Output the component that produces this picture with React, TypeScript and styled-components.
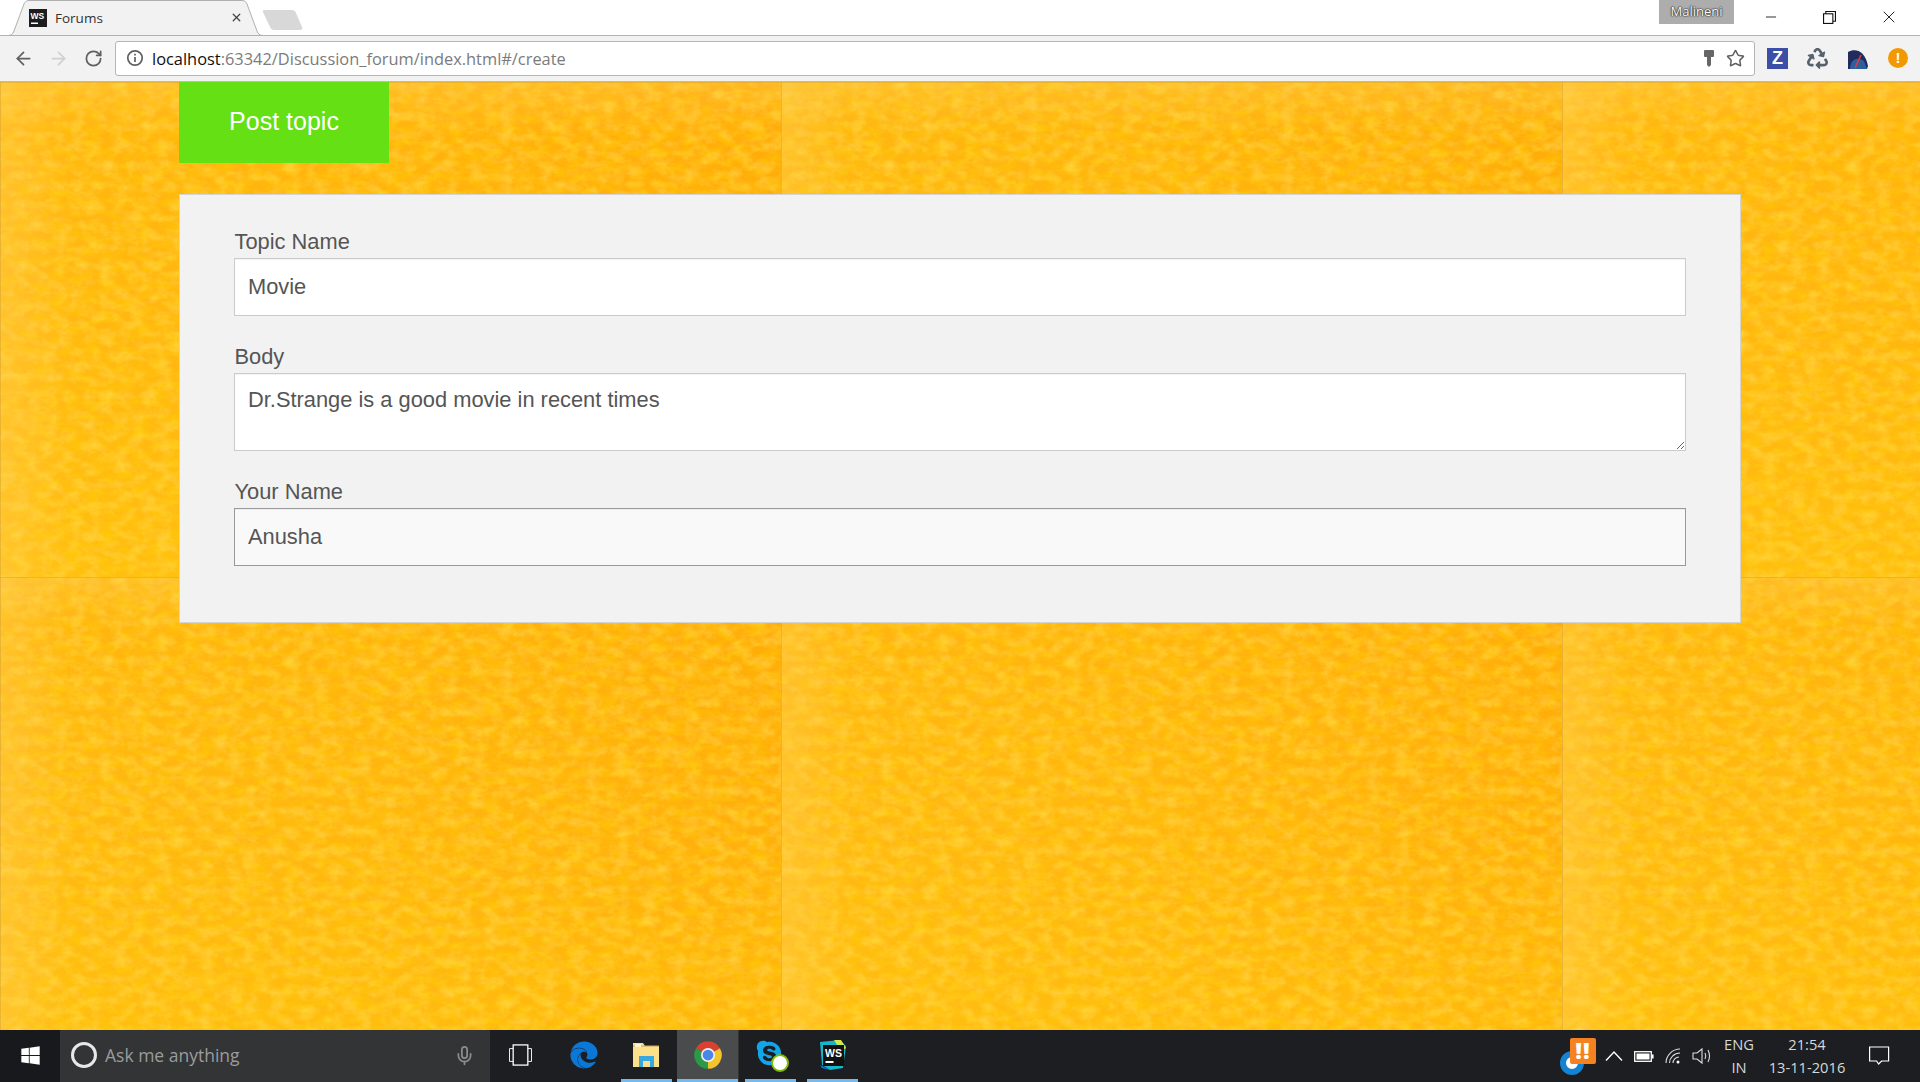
import React from 'react';
import styled, { createGlobalStyle } from 'styled-components';
import { ArrowLeft, ArrowRight, RotateCw, Star, Mic, X, Minus } from 'lucide-react';
import { FaEdge, FaRecycle, FaSkype, FaWindows } from 'react-icons/fa';

const tile = `<svg xmlns="http://www.w3.org/2000/svg" width="781" height="495">
<defs>
<linearGradient id="h" x1="0" x2="1" y1="0" y2="0"><stop offset="0" stop-color="#ffb813"/><stop offset=".45" stop-color="#ffb50f"/><stop offset="1" stop-color="#ffac0a"/></linearGradient>
<linearGradient id="v" x1="0" x2="0" y1="0" y2="1"><stop offset="0" stop-color="#ffa800" stop-opacity=".2"/><stop offset=".5" stop-color="#ffc010" stop-opacity=".1"/><stop offset="1" stop-color="#ffc410" stop-opacity=".55"/></linearGradient>
<linearGradient id="l" x1="0" x2="1" y1="0" y2="0"><stop offset="0" stop-color="#ffd060" stop-opacity=".35"/><stop offset="1" stop-color="#ffd060" stop-opacity="0"/></linearGradient>
<linearGradient id="t" x1="0" x2="0" y1="0" y2="1"><stop offset="0" stop-color="#ffd060" stop-opacity=".3"/><stop offset="1" stop-color="#ffd060" stop-opacity="0"/></linearGradient>
<filter id="n" x="0" y="0" width="100%" height="100%"><feTurbulence type="fractalNoise" baseFrequency=".06 .12" numOctaves="5" seed="7"/><feColorMatrix values="0 0 0 0 1 0 0 0 0 .64 0 0 0 0 0 1.1 0 0 0 -.42"/><feGaussianBlur stdDeviation=".7"/></filter>
<filter id="m" x="0" y="0" width="100%" height="100%"><feTurbulence type="fractalNoise" baseFrequency=".07 .1" numOctaves="5" seed="23"/><feColorMatrix values="0 0 0 0 1 0 0 0 0 .76 0 0 0 0 .12 1 0 0 0 -.38"/><feGaussianBlur stdDeviation=".7"/></filter>
</defs>
<rect width="781" height="495" fill="url(#h)"/>
<rect width="781" height="495" fill="url(#v)"/>
<rect width="781" height="495" filter="url(#n)"/>
<rect width="781" height="495" filter="url(#m)"/>
<rect width="70" height="495" fill="url(#l)"/>
<rect width="781" height="50" fill="url(#t)"/>
<rect width="1" height="495" fill="#c89a30" opacity=".4"/>
<rect width="781" height="1" fill="#c89a30" opacity=".4"/>
</svg>`;

const Global = createGlobalStyle`
  html, body { margin: 0; padding: 0; height: 100%; overflow: hidden; }
  body { font-family: "Liberation Sans", Arial, sans-serif; }
  #root { height: 100%; }
  * { box-sizing: border-box; }
`;

const Page = styled.div`
  display: flex;
  flex-direction: column;
  width: 1920px;
  height: 1082px;
`;

/* ---------- browser chrome ---------- */
const TabStrip = styled.div`
  display: flex;
  align-items: flex-start;
  height: 36px;
  background: #fff;
  border-bottom: 1px solid #b4b4b4;
  padding-left: 8px;
  position: relative;
`;
const Tab = styled.div`
  position: relative;
  display: flex;
  align-items: center;
  width: 255px;
  height: 36px;
  padding: 0 20px 1px 21px;
  font-family: "Open Sans", sans-serif;
  font-size: 13.5px;
  color: #333;
`;
const TabShape = styled.svg`
  position: absolute;
  inset: 0;
  width: 255px;
  height: 36px;
`;
const TabIcon = styled.svg`
  position: relative;
  width: 18px;
  height: 18px;
  margin-right: 8px;
  flex: none;
`;
const TabTitle = styled.span`
  position: relative;
  flex: 1;
`;
const TabClose = styled(X)`
  position: relative;
  width: 13px;
  height: 13px;
  color: #444;
`;
const NewTab = styled.svg`
  width: 44px;
  height: 22px;
  margin: 9px 0 0 -1px;
`;
const Badge = styled.div`
  margin-left: auto;
  width: 75px;
  height: 24px;
  background: #adadad;
  color: #fff;
  font-family: "Open Sans", sans-serif;
  font-size: 13px;
  line-height: 22px;
  text-align: center;
  text-shadow: 0 0 2px #222, 0 0 1px #222, 0 0 1px #222;
`;
const WinButtons = styled.div`
  display: flex;
  width: 186px;
  height: 34px;
  padding-left: 7px;
`;
const WinButton = styled.div`
  display: flex;
  align-items: center;
  justify-content: center;
  width: 59px;
  height: 34px;
  color: #111;
`;
const Toolbar = styled.div`
  display: flex;
  align-items: center;
  height: 46px;
  padding: 0 12px 1px 0;
  background: #f2f2f2;
  border-bottom: 1px solid #bdbdbd;
`;
const NavButton = styled.div<{ $off?: boolean }>`
  display: flex;
  align-items: center;
  justify-content: center;
  width: 35px;
  height: 30px;
  color: ${p => (p.$off ? '#d0d0d0' : '#5f5f5f')};
`;
const NavGroup = styled.div`
  display: flex;
  padding-left: 6px;
  margin-right: 4px;
`;
const Omnibox = styled.div`
  flex: 1;
  display: flex;
  align-items: center;
  height: 35px;
  padding: 0 9px 0 10px;
  background: #fff;
  border: 1px solid #b5b5b5;
  border-radius: 3px;
`;
const Url = styled.div`
  flex: 1;
  margin-left: 8px;
  font-family: "Open Sans", sans-serif;
  font-size: 16.4px;
  color: #111;
  white-space: nowrap;
`;
const UrlRest = styled.span`
  color: #7b7b7b;
`;
const OmniIcons = styled.div`
  display: flex;
  align-items: center;
  gap: 11px;
`;
const Extensions = styled.div`
  display: flex;
  align-items: center;
  gap: 19px;
  margin-left: 12px;
`;
const ZIcon = styled.div`
  width: 21px;
  height: 21px;
  background: #3a4fa5;
  color: #fff;
  font-weight: 700;
  font-size: 18px;
  line-height: 21px;
  text-align: center;
`;
const RecycleIcon = styled(FaRecycle)`
  width: 21px;
  height: 21px;
  color: #55626d;
`;
const AlertIcon = styled.div`
  width: 20px;
  height: 20px;
  border-radius: 50%;
  background: #f29900;
  color: #fff;
  font-weight: 700;
  font-size: 15px;
  line-height: 20px;
  text-align: center;
`;

/* ---------- page ---------- */
const Main = styled.main`
  flex: 1;
  padding: 0 179px;
  background-image: url("data:image/svg+xml,${encodeURIComponent(tile)}");
  background-repeat: repeat;
  background-position: 0 0;
`;
const PostButton = styled.div`
  display: flex;
  align-items: center;
  justify-content: center;
  width: 210px;
  height: 81px;
  padding-bottom: 2px;
  background: #64e014;
  color: #fff;
  font-size: 25px;
`;
const Card = styled.form`
  display: flex;
  flex-direction: column;
  gap: 27px;
  margin-top: 31px;
  padding: 33px 54px 56px;
  background: #f2f2f2;
  border: 1px solid #d4d4d4;
`;
const Field = styled.div`
  display: flex;
  flex-direction: column;
`;
const Label = styled.label`
  font-size: 21.85px;
  line-height: 26px;
  margin-bottom: 4px;
  padding: 1px 0 0 0.5px;
  height: 26px;
  color: #555;
`;
const inputCss = `
  display: block;
  width: 100%;
  padding: 0 13px;
  background: #fff;
  border: 1.6px solid #cbcbcb;
  border-radius: 0;
  outline: none;
  font-family: "Liberation Sans", Arial, sans-serif;
  font-size: 21.85px;
  color: #555;
  box-shadow: inset 0 1px 1px rgba(0,0,0,.05);
`;
const TextInput = styled.input<{ $focus?: boolean }>`
  ${inputCss}
  height: 58px;
  ${p => (p.$focus ? 'background: #f9f9f9; border-color: #999;' : '')}
`;
const TextArea = styled.textarea`
  ${inputCss}
  height: 78px;
  padding-top: 13px;
  line-height: 26px;
`;

/* ---------- taskbar ---------- */
const Taskbar = styled.div`
  display: flex;
  align-items: stretch;
  height: 52px;
  background: #1c1e21;
  color: #fff;
  font-family: "Open Sans", sans-serif;
`;
const StartButton = styled.div`
  display: flex;
  align-items: center;
  justify-content: center;
  width: 60px;
  padding-bottom: 2px;
  background: #17191c;
`;
const StartIcon = styled(FaWindows)`
  width: 21px;
  height: 21px;
`;
const SearchBox = styled.div`
  display: flex;
  align-items: center;
  width: 430px;
  padding: 0 0 2px 11px;
  background: #333436;
  color: #9c9c9c;
  font-size: 17.5px;
`;
const Cortana = styled.div`
  width: 26px;
  height: 26px;
  margin-right: 8px;
  border-radius: 50%;
  border: 3px solid #e8e8e8;
`;
const SearchText = styled.span`
  flex: 1;
`;
const MicIcon = styled(Mic)`
  width: 21px;
  height: 21px;
  margin-right: 15px;
  color: #8c8c8c;
`;
const TaskView = styled.div`
  display: flex;
  align-items: center;
  justify-content: center;
  width: 61px;
  padding-bottom: 2px;
`;
const TaskItem = styled.div<{ $active?: boolean; $open?: boolean }>`
  position: relative;
  display: flex;
  align-items: center;
  justify-content: center;
  width: 62px;
  padding-bottom: 2px;
  background: ${p => (p.$active ? '#4a4b4d' : 'transparent')};
  border-right: ${p => (p.$active ? '1px solid #333' : 'none')};
  &::after {
    content: '';
    display: ${p => (p.$open ? 'block' : 'none')};
    position: absolute;
    left: ${p => (p.$active ? '0' : '6px')};
    right: ${p => (p.$active ? '0' : '5px')};
    bottom: 0;
    height: 3px;
    background: #76b9ed;
  }
`;
const TaskSpacer = styled.div`
  width: 2px;
`;
const EdgeIcon = styled(FaEdge)`
  width: 28px;
  height: 28px;
  color: #0b78d7;
`;
const SkypeWrap = styled.div`
  position: relative;
  width: 30px;
  height: 30px;
  margin-top: -2px;
`;
const SkypeIcon = styled(FaSkype)`
  width: 29px;
  height: 29px;
  color: #12a5e8;
`;
const SkypeStatus = styled.span`
  position: absolute;
  right: -4px;
  bottom: -3px;
  width: 18px;
  height: 18px;
  border-radius: 50%;
  background: #fff;
  border: 2px solid #7fb900;
`;
const Tray = styled.div`
  display: flex;
  align-items: center;
  margin-left: auto;
`;
const UpdateIcon = styled.div`
  position: relative;
  width: 24px;
  height: 24px;
  margin: 14px 21px 0 0;
  border-radius: 50%;
  background: #fff;
  border: 6px solid #1383d2;
`;
const Alerts = styled.div`
  position: absolute;
  left: 4px;
  top: -19px;
  width: 26px;
  height: 26px;
  border-radius: 2px;
  background: #f58220;
  color: #fff;
  font-weight: 800;
  font-size: 23px;
  letter-spacing: 1px;
  line-height: 25px;
  text-align: center;
`;
const TrayIcons = styled.div`
  display: flex;
  align-items: center;
  gap: 11px;
  margin-right: 10px;
`;
const TrayText = styled.div<{ $w: number }>`
  display: flex;
  flex-direction: column;
  align-items: center;
  justify-content: center;
  gap: 3px;
  width: ${p => p.$w}px;
  padding-bottom: 2px;
  font-size: 14.7px;
  line-height: 20px;
  color: #d8d8d8;
`;
const ActionIcon = styled.svg`
  width: 22px;
  height: 22px;
  margin: 0 30px 0 10px;
`;

const ChromeIcon = () => (
  <svg width="30" height="30" viewBox="0 0 24 24">
    <path d="M12 12 2.47 6.5A11 11 0 0 1 21.53 6.5Z" fill="#d8412f" />
    <path d="M12 12 21.53 6.5A11 11 0 0 1 12 23Z" fill="#f5c32c" />
    <path d="M12 12 12 23A11 11 0 0 1 2.47 6.5Z" fill="#2a9a46" />
    <circle cx="12" cy="12" r="5.6" fill="#f1f1f1" />
    <circle cx="12" cy="12" r="4.3" fill="#4a86e8" />
  </svg>
);

const FolderIcon = () => (
  <svg width="28" height="28" viewBox="0 0 28 28">
    <path d="M1 2h10l2 3h14v21H1Z" fill="#fde08a" />
    <path d="M1 5h26" stroke="#c8a458" strokeWidth="1" />
    <rect x="3" y="3" width="6" height="3" fill="#fff4cf" />
    <path d="M7 15h15v11h-4v-6h-7v6H7Z" fill="#3aa8e0" />
  </svg>
);

const WsTaskIcon = () => (
  <svg width="32" height="32" viewBox="0 0 32 32">
    <path d="M4 3 24 1l6 6-3 22-13 2-8-5Z" fill="#19b5c9" />
    <path d="M18 1h7l5 8-5 3Z" fill="#d7e64c" />
    <path d="M4 26 14 31 6 29Z" fill="#087cfa" />
    <rect x="7" y="6" width="21" height="21" fill="#111" />
    <text x="9" y="17.5" fontFamily="Liberation Sans" fontWeight="700" fontSize="10.5" fill="#fff">WS</text>
    <rect x="9.5" y="22" width="8" height="2" fill="#fff" />
  </svg>
);

export default function App() {
  return (
    <Page>
      <Global />
      <TabStrip>
        <Tab>
          <TabShape viewBox="0 0 255 36">
            <path d="M0 35.5C3 35.5 5 34 6 31L16 4C17 2 18 .5 21 .5H234C237 .5 238 2 239 4L249 31C250 34 252 35.5 255 35.5Z" fill="#f2f2f2" stroke="#b0b0b0" />
          </TabShape>
          <TabIcon viewBox="0 0 18 18"><rect width="18" height="18" fill="#1d1d1f" /><text x="1.5" y="9.5" fontFamily="Liberation Sans" fontWeight="700" fontSize="8.5" fill="#fff">WS</text><rect x="2" y="13.5" width="7" height="1.5" fill="#fff" /></TabIcon>
          <TabTitle>Forums</TabTitle>
          <TabClose strokeWidth={2.4} />
        </Tab>
        <NewTab viewBox="0 0 44 22">
          <path d="M2 1H30C32 1 33 2 34 4L40 18C41 20 40 21 38 21H12C10 21 9 20 8 18L1 3C.5 2 1 1 2 1Z" fill="#d8d8d8" />
        </NewTab>
        <Badge>Malineni</Badge>
        <WinButtons>
          <WinButton><Minus size={16} strokeWidth={1.3} /></WinButton>
          <WinButton>
            <svg width="13" height="13" viewBox="0 0 14 14" fill="none" stroke="#111" strokeWidth="1.2"><rect x=".6" y="3" width="10" height="10.4" /><path d="M3 3V.6h10.4V11H10.6" /></svg>
          </WinButton>
          <WinButton><X size={20} strokeWidth={1.1} /></WinButton>
        </WinButtons>
      </TabStrip>
      <Toolbar>
        <NavGroup>
          <NavButton><ArrowLeft size={21} strokeWidth={2} /></NavButton>
          <NavButton $off><ArrowRight size={21} strokeWidth={2} /></NavButton>
          <NavButton><RotateCw size={19} strokeWidth={2.2} /></NavButton>
        </NavGroup>
        <Omnibox>
          <svg width="18" height="18" viewBox="0 0 18 18" fill="none" stroke="#5f5f5f" strokeWidth="1.7"><circle cx="9" cy="9" r="7.2" /><path d="M9 8v5M9 4.8v1.6" /></svg>
          <Url>localhost<UrlRest>:63342/Discussion_forum/index.html#/create</UrlRest></Url>
          <OmniIcons>
            <svg width="12" height="18" viewBox="0 0 12 18"><rect x="1" y="1" width="10" height="7" rx="1" fill="#666" /><rect x="4" y="8" width="4" height="8" fill="#666" /><path d="M4 16h4l-2 2Z" fill="#666" /></svg>
            <Star size={19} strokeWidth={1.9} color="#5f5f5f" />
          </OmniIcons>
        </Omnibox>
        <Extensions>
          <ZIcon>Z</ZIcon>
          <RecycleIcon />
          <svg width="22" height="21" viewBox="0 0 22 21">
            <path d="M1 21V4C8 0 18 2 21 18L20 21Z" fill="#232a5c" />
            <path d="M3 21C3 12 10 8 17 13L20 21Z" fill="#2d5e9e" />
            <path d="M8 20 14 7" stroke="#e23a3a" strokeWidth="1.6" />
          </svg>
          <AlertIcon>!</AlertIcon>
        </Extensions>
      </Toolbar>
      <Main>
        <PostButton>Post topic</PostButton>
        <Card>
          <Field>
            <Label>Topic Name</Label>
            <TextInput defaultValue="Movie" />
          </Field>
          <Field>
            <Label>Body</Label>
            <TextArea defaultValue="Dr.Strange is a good movie in recent times" />
          </Field>
          <Field>
            <Label>Your Name</Label>
            <TextInput $focus defaultValue="Anusha" />
          </Field>
        </Card>
      </Main>
      <Taskbar>
        <StartButton><StartIcon /></StartButton>
        <SearchBox>
          <Cortana />
          <SearchText>Ask me anything</SearchText>
          <MicIcon />
        </SearchBox>
        <TaskView>
          <svg width="25" height="22" viewBox="0 0 26 24" fill="none" stroke="#fff" strokeWidth="1.4"><rect x="5" y="1" width="16" height="22" /><path d="M5 5H1v14h4M21 5h4v14h-4" strokeWidth="1" /></svg>
        </TaskView>
        <TaskSpacer />
        <TaskItem><EdgeIcon /></TaskItem>
        <TaskItem $open><FolderIcon /></TaskItem>
        <TaskItem $active $open><ChromeIcon /></TaskItem>
        <TaskItem $open>
          <SkypeWrap><SkypeIcon /><SkypeStatus /></SkypeWrap>
        </TaskItem>
        <TaskItem $open><WsTaskIcon /></TaskItem>
        <Tray>
          <UpdateIcon><Alerts>!!</Alerts></UpdateIcon>
          <TrayIcons>
            <svg width="18" height="12" viewBox="0 0 18 12" fill="none" stroke="#fff" strokeWidth="1.4"><path d="M1 10.5 9 2l8 8.5" /></svg>
            <svg width="20" height="11" viewBox="0 0 20 11"><rect x=".7" y=".7" width="16.6" height="9.6" fill="none" stroke="#fff" strokeWidth="1.3" /><rect x="2.5" y="2.5" width="13" height="6" fill="#fff" /><rect x="18" y="3.5" width="1.6" height="4" fill="#fff" /></svg>
            <svg width="16" height="16" viewBox="0 0 16 16" fill="none" stroke="#ddd" strokeWidth="1.1"><path d="M1 15C1 8 7 1 15 1M4.5 15C4.5 10 9 5 15 5M8 15c0-3 2.500-6 6-6" /><circle cx="13" cy="14" r="1.500" fill="#fff" stroke="none" /></svg>
            <svg width="20" height="18" viewBox="0 0 20 18" fill="none" stroke="#ddd" strokeWidth="1.1"><path d="M1 6h4l5-4v14l-5-4H1Z" /><path d="M13 6c1 2 1 4 0 6M16 3c2 4 2 8 0 12" /></svg>
          </TrayIcons>
          <TrayText $w={34}><span>ENG</span><span>IN</span></TrayText>
          <TrayText $w={102}><span>21:54</span><span>13-11-2016</span></TrayText>
          <ActionIcon viewBox="0 0 22 22" fill="none" stroke="#fff" strokeWidth="1.2"><path d="M1.600 2h19v14h-7l-3 3-2-3h-7Z" /></ActionIcon>
        </Tray>
      </Taskbar>
    </Page>
  );
}
